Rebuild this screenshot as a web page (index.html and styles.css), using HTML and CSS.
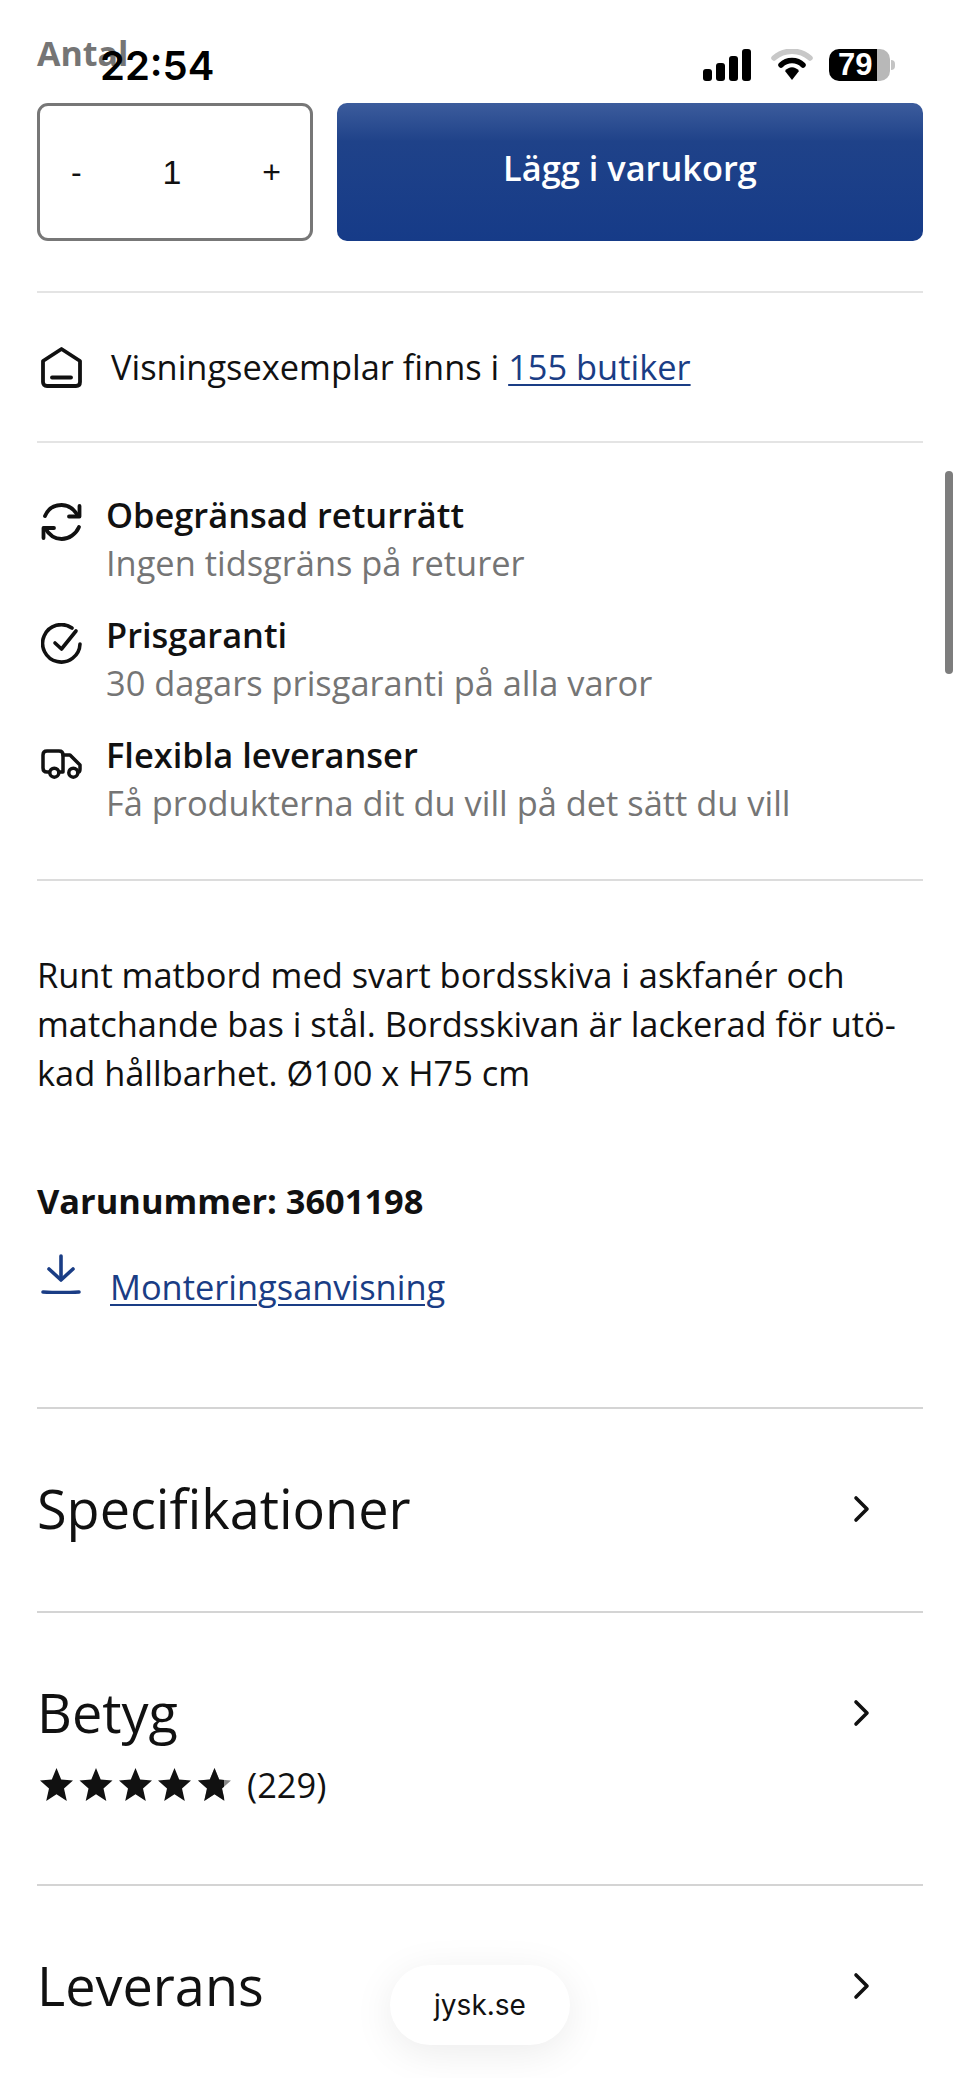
FILE: index.html
```html
<!DOCTYPE html>
<html lang="sv">
<head>
    <meta charset="UTF-8">
    <meta name="viewport" content="width=device-width, initial-scale=1.0">
    <title>JYSK</title>
    <link rel="stylesheet" href="styles.css">
</head>
<body>
    <div class="status-bar">
        <span class="time">22:54</span>
        <div class="status-icons">
            <svg width="48" height="32" viewBox="0 0 48 32"><rect x="0" y="20" width="9" height="12" rx="3"/><rect x="13" y="14" width="9" height="18" rx="3"/><rect x="26" y="7" width="9" height="25" rx="3"/><rect x="39" y="0" width="9" height="32" rx="3"/></svg>
            <svg width="42" height="32" viewBox="0 0 42 32"><path d="M3 9 C13 0 29 0 39 9" fill="none" stroke="#c8c8c8" stroke-width="5.5" stroke-linecap="round"/><path d="M10 16 C16 10 26 10 32 16" fill="none" stroke="#000" stroke-width="5.5" stroke-linecap="round"/><path d="M14 22 C18 17 24 17 28 22 L21 31 Z"/></svg>
            <div class="battery">
                <div class="battery-body"><span>79</span></div>
                <div class="battery-cap"></div>
            </div>
        </div>
    </div>

    <main class="page">
        <div class="qty-label">Antal</div>
        <div class="buy-row">
            <div class="qty">
                <span class="qty-btn">-</span>
                <span class="qty-num">1</span>
                <span class="qty-btn">+</span>
            </div>
            <button class="add-btn">Lägg i varukorg</button>
        </div>

        <div class="store-row">
            <svg class="store-icon" width="41" height="41" viewBox="0 0 41 41" fill="none" stroke="#111" stroke-width="3.8" stroke-linejoin="round" stroke-linecap="round"><path d="M2 14 L20.500 2 L39 14 V35 Q39 39 35 39 H6 Q2 39 2 35 Z"/><path d="M11 30.500 H30"/></svg>
            <span class="store-text">Visningsexemplar finns i <a href="#">155 butiker</a></span>
        </div>

        <div class="usp-list">
            <div class="usp">
                <svg class="usp-icon" width="41" height="38" viewBox="0 0 41 38" fill="none" stroke="#111" stroke-width="3.8" stroke-linecap="round" stroke-linejoin="round"><path d="M4 13 C7 6 13 2 20.700 2 C28 2 33 6 37 13"/><path d="M28 13.500 H38.500 V3"/><path d="M38 24 C35 31 28 36 20.700 36 C13 36 8 32 4 25"/><path d="M2.500 35 V25 H13"/></svg>
                <div>
                    <div class="usp-title">Obegränsad returrätt</div>
                    <div class="usp-text">Ingen tidsgräns på returer</div>
                </div>
            </div>
            <div class="usp">
                <svg class="usp-icon" width="41" height="41" viewBox="0 0 41 41" fill="none" stroke="#111" stroke-width="3.6" stroke-linecap="round" stroke-linejoin="round"><path d="M31 5 A18.700 18.700 0 1 0 39 21"/><path d="M14 20 L20.500 26 L35 8"/></svg>
                <div>
                    <div class="usp-title">Prisgaranti</div>
                    <div class="usp-text">30 dagars prisgaranti på alla varor</div>
                </div>
            </div>
            <div class="usp">
                <svg class="usp-icon usp-truck" width="41" height="30" viewBox="0 0 41 30" fill="none" stroke="#111" stroke-width="3.5" stroke-linecap="round" stroke-linejoin="round"><path d="M8 23 H6 Q2 23 2 19 V6 Q2 2 6 2 H18 Q22 2 22 6 V23 H19"/><path d="M22 6 H29 L39 16 V20 Q39 23 37.500 23"/><circle cx="13.300" cy="23.700" r="4.500"/><circle cx="32.300" cy="23.700" r="4.500"/></svg>
                <div>
                    <div class="usp-title">Flexibla leveranser</div>
                    <div class="usp-text">Få produkterna dit du vill på det sätt du vill</div>
                </div>
            </div>
        </div>

        <div class="info">
            <p class="desc">Runt matbord med svart bordsskiva i askfanér och<br>matchande bas i stål. Bordsskivan är lackerad för utö-<br>kad hållbarhet. Ø100 x H75 cm</p>
            <div class="sku">Varunummer: 3601198</div>
            <div class="manual">
                <svg width="40" height="40" viewBox="0 0 40 40" fill="none" stroke="#1a3d85" stroke-width="3.6" stroke-linecap="round" stroke-linejoin="round"><path d="M20 2 V25"/><path d="M8 15 L20 26 L32 15"/><path d="M2 38 Q20 39 38 38"/></svg>
                <a href="#">Monteringsanvisning</a>
            </div>
        </div>

        <div class="acc acc-spec">
            <div class="acc-head">
                <span>Specifikationer</span>
                <svg class="chevron" width="18" height="28" viewBox="0 0 18 28" fill="none" stroke="#111" stroke-width="3.6" stroke-linecap="round" stroke-linejoin="round"><path d="M3 3 L14 14 L3 25"/></svg>
            </div>
        </div>
        <div class="acc acc-rate">
            <div class="acc-head">
                <span>Betyg</span>
                <svg class="chevron" width="18" height="28" viewBox="0 0 18 28" fill="none" stroke="#111" stroke-width="3.6" stroke-linecap="round" stroke-linejoin="round"><path d="M3 3 L14 14 L3 25"/></svg>
            </div>
            <div class="rating">
                <svg class="stars" width="194" height="34" viewBox="0 0 194 34">
                    <defs>
                        <path id="star" d="M16.500 0 L21.200 11.500 L33 12.500 L24 20.500 L26.800 33 L16.500 26.200 L6.200 33 L9 20.500 L0 12.500 L11.800 11.500 Z"/>
                        <clipPath id="star-part"><rect x="158" y="0" width="26" height="34"/></clipPath>
                    </defs>
                    <use href="#star" x="158" fill="#888"/>
                    <use href="#star" x="0"/><use href="#star" x="39.500"/><use href="#star" x="79"/><use href="#star" x="118"/>
                    <g clip-path="url(#star-part)"><use href="#star" x="158"/></g>
                </svg>
                <span>(229)</span>
            </div>
        </div>
        <div class="acc acc-last">
            <div class="acc-head">
                <span>Leverans</span>
                <svg class="chevron" width="18" height="28" viewBox="0 0 18 28" fill="none" stroke="#111" stroke-width="3.6" stroke-linecap="round" stroke-linejoin="round"><path d="M3 3 L14 14 L3 25"/></svg>
            </div>
        </div>
    </main>

    <div class="scrollbar"></div>
    <div class="url-pill">jysk.se</div>
</body>
</html>
```
FILE: styles.css
```css
* {
    box-sizing: border-box;
}
html, body {
    margin: 0;
    height: 2078px;
    overflow: hidden;
}
body {
    font-family: "Open Sans", sans-serif;
    background: #fff;
    color: #111;
    position: relative;
}
a {
    color: #1a3d85;
    text-decoration: underline;
    text-decoration-thickness: 2px;
    text-underline-offset: 4px;
}

/* phone chrome on top of the page */
.status-bar {
    position: absolute;
    top: 39px;
    left: 100px;
    right: 65px;
    display: flex;
    justify-content: space-between;
    align-items: center;
    font-family: "Liberation Sans", sans-serif;
    color: #000;
}
.time {
    font-family: Inter, sans-serif;
    font-size: 40px;
    font-weight: 600;
    line-height: 50px;
    padding-top: 2px;
}
.status-icons {
    display: flex;
    align-items: center;
    gap: 20px;
}
.status-icons svg {
    display: block;
}
.battery {
    display: flex;
    align-items: center;
    gap: 1px;
    margin-left: -4px;
}
.battery-body {
    width: 61px;
    height: 32px;
    border-radius: 10px;
    background: linear-gradient(90deg, #000 79%, #b8b8b8 79%);
    color: #fff;
    font-size: 31px;
    font-weight: 700;
    line-height: 32px;
    padding-left: 9px;
}
.battery-cap {
    width: 4px;
    height: 10px;
    border-radius: 0 4px 4px 0;
    background: #c4c4c4;
}
.scrollbar {
    position: absolute;
    left: 945px;
    top: 471px;
    width: 8px;
    height: 203px;
    border-radius: 4px;
    background: #7d7d7d;
}
.url-pill {
    position: absolute;
    left: 390px;
    top: 1965px;
    width: 180px;
    height: 80px;
    border-radius: 40px;
    background: #fff;
    box-shadow: 0 8px 40px rgba(0, 0, 0, 0.08);
    font-family: Inter, sans-serif;
    font-size: 28px;
    line-height: 80px;
    text-align: center;
}

.page {
    padding: 0 37px;
}
.qty-label {
    font-size: 34px;
    font-weight: 700;
    color: #757575;
    line-height: 46px;
    padding-top: 30px;
    height: 103px;
}
.buy-row {
    display: flex;
    gap: 24px;
    height: 138px;
}
.qty {
    width: 276px;
    border: 3px solid #777;
    border-radius: 11px;
    display: flex;
    justify-content: space-between;
    align-items: center;
    padding: 0 29px 0 31px;
    font-family: "Liberation Sans", sans-serif;
    font-size: 34px;
}
.qty-btn {
    font-size: 32px;
}
.add-btn {
    flex: 1;
    border: none;
    border-radius: 10px;
    background: linear-gradient(180deg, #3c5c9c 0%, #1f4289 28%, #163b88 100%);
    color: #fff;
    font-family: "Open Sans", sans-serif;
    font-size: 34.4px;
    font-weight: 600;
    padding-bottom: 10px;
}
.store-row {
    margin-top: 50px;
    height: 152px;
    border-top: 2px solid #e4e4e4;
    border-bottom: 2px solid #e4e4e4;
    display: flex;
    align-items: center;
    gap: 29px;
    font-size: 34.4px;
    padding-left: 4px;
}
.store-text {
    margin-bottom: 2px;
}
.store-icon {
    margin-left: 0;
}
.usp-list {
    height: 438px;
    padding-top: 47px;
    border-bottom: 2px solid #dcdcdc;
}
.usp {
    display: flex;
    gap: 24px;
    height: 120px;
}
.usp-icon {
    flex: none;
    margin: 13px 0 0 4px;
}
.usp-truck {
    margin-top: 19px;
}
.usp-title {
    font-size: 34.4px;
    font-weight: 600;
    line-height: 50px;
}
.usp-text {
    font-size: 34.4px;
    color: #757575;
    line-height: 49px;
    margin-top: -2px;
}
.info {
    height: 526px;
    padding-top: 69px;
}
.desc {
    margin: 0;
    font-size: 34.4px;
    line-height: 49px;
}
.sku {
    margin-top: 79px;
    font-size: 34.4px;
    font-weight: 700;
    line-height: 50px;
}
.manual {
    display: flex;
    gap: 29px;
    margin-top: 28px;
    padding-left: 4px;
    font-size: 34.4px;
    line-height: 50px;
}
.manual a {
    margin-top: 8px;
}
.acc {
    border-top: 2px solid #d4d4d4;
    font-size: 54px;
    line-height: 70px;
}
.acc-spec {
    height: 204px;
    padding-top: 64px;
}
.acc-rate {
    height: 273px;
    padding-top: 64px;
}
.acc-last {
    height: 195px;
    padding-top: 64px;
}
.acc-head {
    display: flex;
    justify-content: space-between;
    align-items: center;
    padding-right: 52px;
}
.chevron {
    margin-top: 2px;
}
.rating {
    display: flex;
    align-items: center;
    gap: 13px;
    margin: 13px 0 0 3px;
    font-size: 34.4px;
    line-height: 50px;
}
.stars {
    display: block;
    fill: #111;
}
```
